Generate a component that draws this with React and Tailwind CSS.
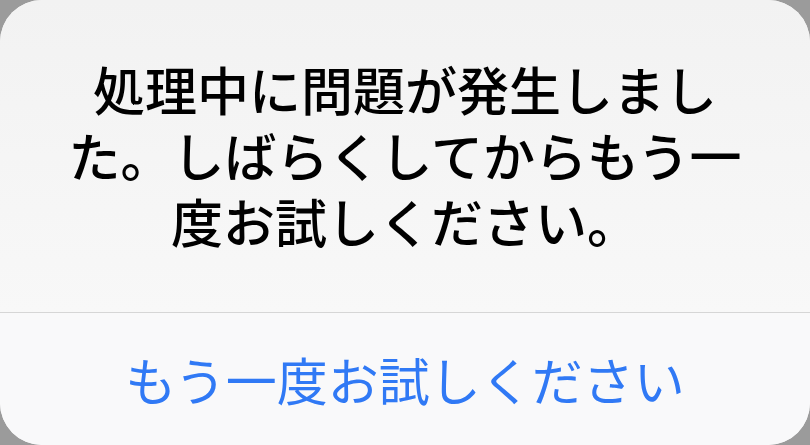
import React from 'react';

export default function App() {
  return (
    <div className="w-[810px] h-[445px] bg-[#9b9b9b] overflow-hidden" style={{ fontFamily: '"Noto Sans CJK JP", "Noto Sans", sans-serif' }}>
      <div className="w-full h-full rounded-[42px] overflow-hidden flex flex-col bg-[#f6f6f6]">
        <div className="h-[312px] shrink-0 px-[50px] pt-[56px] bg-gradient-to-b from-[#f2f2f2] to-[#f8f8f8]">
          <p className="text-[52px] leading-[66px] font-medium text-black text-center">
            処理中に問題が発生しました。しばらくしてからもう一度お試しください。
          </p>
        </div>
        <div className="h-px bg-[#d6d6d6]" />
        <button className="flex-1 flex items-center justify-center bg-[#f9f9fa] text-[#3079f5] text-[51px] leading-none">
          もう一度お試しください
        </button>
      </div>
    </div>
  );
}
